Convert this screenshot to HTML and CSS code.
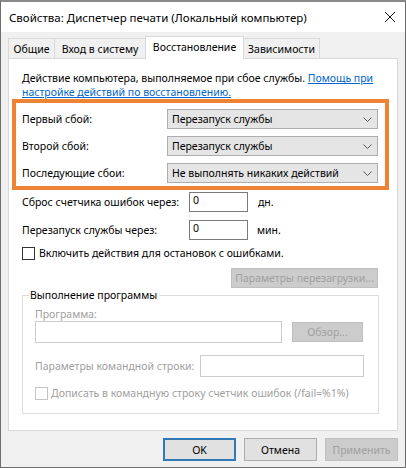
FILE: index.html
```html
<!DOCTYPE html>
<html lang="ru">
<head>
<meta charset="utf-8">
<title>Свойства</title>
<link rel="stylesheet" href="styles.css">
</head>
<body>
<div class="window">
  <div class="titlebar">
    <span class="title">Свойства: Диспетчер печати (Локальный компьютер)</span>
    <svg class="close" width="12" height="12" viewBox="0 0 12 12"><path d="M1 1L11 11M11 1L1 11" stroke="#111" stroke-width="1" fill="none"/></svg>
  </div>

  <div class="tabs">
    <div class="tab tab-general">Общие</div>
    <div class="tab tab-logon">Вход в систему</div>
    <div class="tab tab-recovery active">Восстановление</div>
    <div class="tab tab-deps">Зависимости</div>
  </div>

  <div class="panel">
    <p class="desc">Действие компьютера, выполняемое при сбое службы. <a class="link">Помощь при<br>настройке действий по восстановлению.</a></p>

    <div class="highlight">
      <div class="row">
        <span class="row-label">Первый сбой:</span>
        <div class="combo"><span>Перезапуск службы</span><svg class="chev" width="9" height="5" viewBox="0 0 9 5"><path d="M0.5 0.5L4.5 4.5L8.5 0.5" stroke="#5a5a5a" fill="none"/></svg></div>
      </div>
      <div class="row">
        <span class="row-label">Второй сбой:</span>
        <div class="combo"><span>Перезапуск службы</span><svg class="chev" width="9" height="5" viewBox="0 0 9 5"><path d="M0.5 0.5L4.5 4.5L8.5 0.5" stroke="#5a5a5a" fill="none"/></svg></div>
      </div>
      <div class="row">
        <span class="row-label">Последующие сбои:</span>
        <div class="combo"><span>Не выполнять никаких действий</span><svg class="chev" width="9" height="5" viewBox="0 0 9 5"><path d="M0.5 0.5L4.5 4.5L8.5 0.5" stroke="#5a5a5a" fill="none"/></svg></div>
      </div>
    </div>

    <div class="field-row first">
      <span class="field-label">Сброс счетчика ошибок через:</span>
      <div class="edit">0</div>
      <span class="unit unit-days">дн.</span>
    </div>
    <div class="field-row second">
      <span class="field-label">Перезапуск службы через:</span>
      <div class="edit">0</div>
      <span class="unit">мин.</span>
    </div>

    <div class="check-row">
      <span class="checkbox"></span>
      <span class="check-text">Включить действия для остановок с ошибками.</span>
    </div>

    <div class="restart-row">
      <div class="btn disabled btn-restart">Параметры перезагрузки...</div>
    </div>

    <div class="group">
      <div class="group-title">Выполнение программы</div>
      <div class="g-label">Программа:</div>
      <div class="g-prog-row">
        <div class="edit disabled-edit prog-edit"></div>
        <div class="btn disabled btn-browse">Обзор...</div>
      </div>
      <div class="g-cmd-row">
        <span class="g-cmd-label">Параметры командной строки:</span>
        <div class="edit disabled-edit cmd-edit"></div>
      </div>
      <div class="g-check-row">
        <span class="checkbox disabled-box"></span>
        <span class="check-text">Дописать в командную строку счетчик ошибок (/fail=%1%)</span>
      </div>
    </div>
  </div>

  <div class="buttons">
    <div class="btn btn-ok">OK</div>
    <div class="btn btn-cancel">Отмена</div>
    <div class="btn disabled btn-apply">Применить</div>
  </div>
</div>
</body>
</html>
```
FILE: styles.css
```css
html, body {
  margin: 0;
  padding: 0;
  background: #f0f0f0;
}

body {
  font-family: "Noto Sans", "DejaVu Sans", sans-serif;
  font-size: 10.5px;
  color: #000;
}

.window {
  width: 406px;
  height: 468px;
  box-sizing: border-box;
  border: 1px solid #6e6e6e;
  border-top: 2px solid #8a8a8a;
  background: #f0f0f0;
  display: flex;
  flex-direction: column;
  white-space: nowrap;
}

/* Title bar */
.titlebar {
  height: 30px;
  background: #fff;
  display: flex;
  align-items: center;
  justify-content: space-between;
  padding: 0 9px 0 8px;
  flex: none;
}

.title {
  font-size: 11.5px;
  color: #000;
}

.close {
  display: block;
}

/* Tabs */
.tabs {
  display: flex;
  align-items: flex-end;
  height: 22px;
  margin: 4px 0 0 7px;
  flex: none;
  position: relative;
  z-index: 1;
}

.tab {
  box-sizing: border-box;
  height: 20px;
  border: 1px solid #d9d9d9;
  border-bottom: none;
  background: #f0f0f0;
  display: flex;
  align-items: center;
  justify-content: center;
  padding-top: 1px;
}

.tab + .tab {
  margin-left: -1px;
}

.tab-general { width: 47px; }
.tab-logon { width: 92px; }
.tab-recovery { width: 99px; }
.tab-deps { width: 77px; }

.tab.active {
  height: 23px;
  background: #fff;
  margin-bottom: -1px;
  padding-top: 0;
  padding-bottom: 2px;
}

/* Panel */
.panel {
  box-sizing: border-box;
  width: 390px;
  height: 373px;
  margin-left: 7px;
  border: 1px solid #d9d9d9;
  background: #fff;
  flex: none;
  display: flex;
  flex-direction: column;
}

.desc {
  margin: 12px 0 0 13px;
  line-height: 14px;
  height: 28px;
}

.link {
  color: #0066cc;
  text-decoration: underline;
  text-underline-offset: 1px;
}

/* Orange highlight box */
.highlight {
  box-sizing: border-box;
  width: 377px;
  margin-left: 3px;
  border: 4px solid #ee8334;
  padding: 6px 7px 3px 6px;
  display: flex;
  flex-direction: column;
  gap: 7px;
}

.row {
  display: flex;
  align-items: center;
  height: 20px;
}

.row-label {
  width: 145px;
  flex: none;
}

.combo {
  box-sizing: border-box;
  width: 211px;
  height: 20px;
  background: #e5e5e5;
  border: 1px solid #adadad;
  display: flex;
  align-items: center;
  justify-content: space-between;
  padding: 0 4px 0 4px;
}

.chev {
  display: block;
  margin-right: 1px;
}

/* Fields */
.field-row {
  display: flex;
  align-items: center;
  height: 20px;
  margin-left: 13px;
}

.field-row.first { margin-top: 2px; }
.field-row.second { margin-top: 8px; }

.field-label {
  width: 167px;
  flex: none;
}

.edit {
  box-sizing: border-box;
  height: 20px;
  width: 59px;
  border: 1px solid #7a7a7a;
  background: #fff;
  padding: 0 0 0 3px;
  line-height: 15px;
  flex: none;
}

.unit {
  margin-left: 9px;
}

.unit-days {
  margin-left: 10px;
}

.check-row {
  display: flex;
  align-items: center;
  height: 14px;
  margin: 6px 0 0 13px;
  gap: 4px;
}

.checkbox {
  box-sizing: border-box;
  width: 13px;
  height: 13px;
  border: 1px solid #333;
  background: #fff;
  flex: none;
}

.checkbox.disabled-box {
  border-color: #c4c4c4;
}

/* Buttons */
.btn {
  box-sizing: border-box;
  display: flex;
  align-items: center;
  justify-content: center;
  background: #e1e1e1;
  border: 1px solid #adadad;
  flex: none;
}

.btn.disabled {
  background: #cccccc;
  border-color: #bfbfbf;
  color: #a0a0a0;
}

.restart-row {
  display: flex;
  justify-content: flex-end;
  margin: 8px 19px 0 0;
}

.btn-restart {
  width: 147px;
  height: 20px;
}

/* Group box */
.group {
  box-sizing: border-box;
  width: 357px;
  height: 119px;
  margin: 7px 0 0 13px;
  border: 1px solid #dcdcdc;
  padding: 0 0 0 12px;
  display: flex;
  flex-direction: column;
  align-items: flex-start;
}

.group-title {
  margin: -8px 0 0 -6px;
  padding: 0 2px 0 1px;
  height: 14px;
  line-height: 14px;
  background: #fff;
}

.g-label {
  color: #a0a0a0;
  margin-top: 5px;
  line-height: 14px;
  height: 14px;
}

.g-prog-row {
  display: flex;
  align-items: center;
  height: 22px;
  gap: 10px;
}

.disabled-edit {
  border-color: #cccccc;
  height: 22px;
}

.prog-edit {
  width: 247px;
}

.btn-browse {
  width: 71px;
  height: 20px;
}

.g-cmd-row {
  display: flex;
  align-items: center;
  height: 22px;
  margin-top: 12px;
  color: #a0a0a0;
}

.g-cmd-label {
  width: 165px;
  flex: none;
}

.cmd-edit {
  width: 164px;
}

.g-check-row {
  display: flex;
  align-items: center;
  height: 14px;
  margin-top: 9px;
  gap: 3px;
  color: #a0a0a0;
}

/* Dialog buttons */
.buttons {
  display: flex;
  justify-content: flex-end;
  gap: 8px;
  margin: 7px 7px 0 0;
  flex: none;
}

.buttons .btn {
  width: 73px;
  height: 23px;
}

.btn-ok {
  border: 2px solid #3279b8;
}
```
